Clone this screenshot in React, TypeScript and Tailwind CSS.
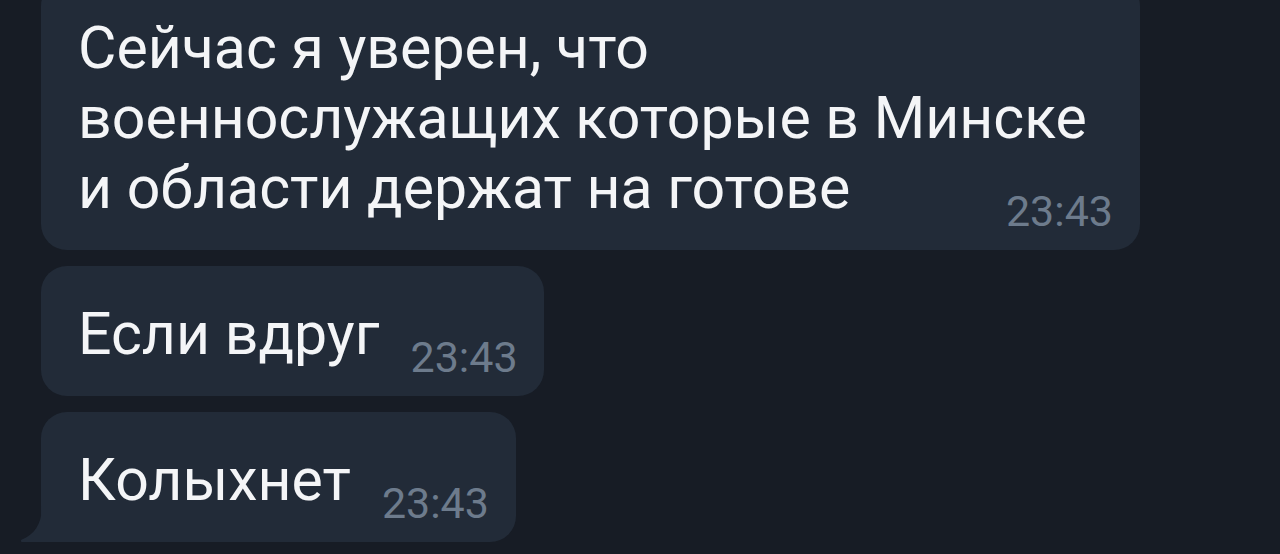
import React from "react";

function Time() {
  return (
    <div className="shrink-0 text-[43px] leading-none text-[#6d7b8c]">23:43</div>
  );
}

export default function App() {
  return (
    <div className="w-[1280px] h-[554px] overflow-hidden bg-[#171c25] pl-[41px] font-['Roboto',sans-serif]">
      <div className="flex flex-col items-start gap-4 -mt-[20px]">
        <div className="w-[1099px] rounded-[26px] bg-[#222b38] pl-[37px] pr-[27px] pt-[33px] pb-[17px] grid">
          <div className="col-start-1 row-start-1 mb-[10px] text-[59px] leading-[70px] text-[#f4f5f7] whitespace-nowrap">
            Сейчас я уверен, что
            <br />
            военнослужащих которые в Минске
            <br />
            и области держат на готове
          </div>
          <div className="col-start-1 row-start-1 self-end justify-self-end">
            <Time />
          </div>
        </div>
        <div className="rounded-[26px] bg-[#222b38] pl-[37px] pr-[26px] pt-[33px] pb-[17px] flex items-end gap-[31px]">
          <div className="mb-[10px] text-[59px] leading-[70px] text-[#f4f5f7] whitespace-nowrap">Если вдруг</div>
          <Time />
        </div>
        <div className="relative rounded-[26px] rounded-bl-none bg-[#222b38] pl-[37px] pr-[27px] pt-[33px] pb-[17px] flex items-end gap-[31px]">
          <svg
            className="absolute left-[-21px] bottom-0"
            width="22"
            height="36"
            viewBox="0 0 22 36"
          >
            <path d="M22 0 C22 18 14 29 2 33.5 Q0 34.5 1.5 36 L22 36 Z" fill="#222b38" />
          </svg>
          <div className="mb-[10px] text-[59px] leading-[70px] text-[#f4f5f7] whitespace-nowrap">Колыхнет</div>
          <Time />
        </div>
      </div>
    </div>
  );
}
